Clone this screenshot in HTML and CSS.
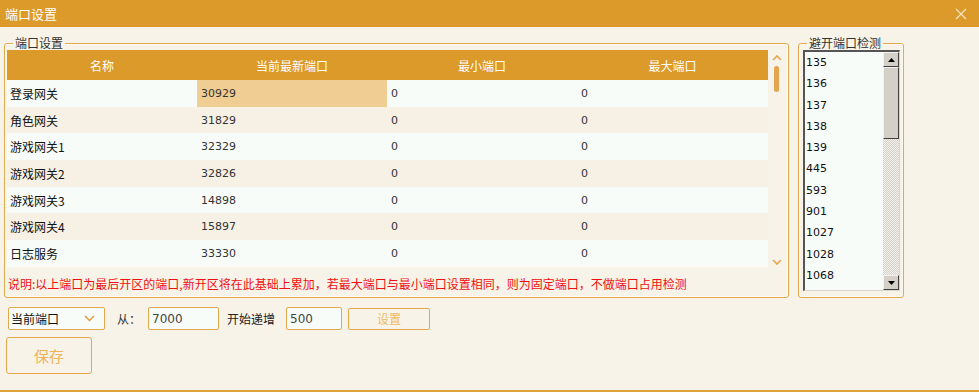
FILE: index.html
```html
<!DOCTYPE html>
<html lang="zh-CN">
<head>
    <meta charset="UTF-8">
    <title>端口设置</title>
    <link rel="stylesheet" href="styles.css">
</head>
<body>
    <div class="window">
        <div class="titlebar">
            <span class="title">端口设置</span>
            <svg class="close" width="12" height="12" viewBox="0 0 12 12">
                <path d="M1 1L11 11M11 1L1 11" stroke="#f6e6c4" stroke-width="1.2" fill="none"/>
            </svg>
        </div>

        <div class="content">
            <div class="top">
                <fieldset class="group ports">
                    <legend>端口设置</legend>
                    <div class="grid-wrap">
                        <div class="grid">
                            <div class="head">
                                <span>名称</span>
                                <span>当前最新端口</span>
                                <span>最小端口</span>
                                <span>最大端口</span>
                            </div>
                            <div class="rows" id="rows"></div>
                        </div>
                        <div class="vscroll">
                            <svg width="10" height="6" viewBox="0 0 10 6"><path d="M1 5L5 1L9 5" stroke="#e3a54e" stroke-width="1.6" fill="none"/></svg>
                            <div class="thumb"></div>
                            <div class="spacer"></div>
                            <svg width="10" height="6" viewBox="0 0 10 6"><path d="M1 1L5 5L9 1" stroke="#e3a54e" stroke-width="1.6" fill="none"/></svg>
                        </div>
                    </div>
                    <p class="note">说明:以上端口为最后开区的端口,新开区将在此基础上累加，若最大端口与最小端口设置相同，则为固定端口，不做端口占用检测</p>
                </fieldset>

                <fieldset class="group skip">
                    <legend>避开端口检测</legend>
                    <div class="listbox">
                        <ul class="items" id="skip-list"></ul>
                        <div class="classic-scroll">
                            <div class="btn"><svg width="7" height="4" viewBox="0 0 7 4"><path d="M0 4L3.5 0L7 4Z" fill="#000"/></svg></div>
                            <div class="cthumb"></div>
                            <div class="track"></div>
                            <div class="btn"><svg width="7" height="4" viewBox="0 0 7 4"><path d="M0 0L3.5 4L7 0Z" fill="#000"/></svg></div>
                        </div>
                    </div>
                </fieldset>
            </div>

            <div class="controls">
                <div class="select">
                    <span>当前端口</span>
                    <svg width="11" height="7" viewBox="0 0 11 7"><path d="M1 1L5.5 5.5L10 1" stroke="#e09a38" stroke-width="1.4" fill="none"/></svg>
                </div>
                <label class="from">从：</label>
                <input class="field start" type="text" value="7000">
                <label class="step-label">开始递增</label>
                <input class="field step" type="text" value="500">
                <button class="btn-set">设置</button>
            </div>
            <button class="btn-save">保存</button>
        </div>
    </div>

    <script>
        // port rows
        const ports = [
            { name: "登录网关", current: "30929", min: "0", max: "0" },
            { name: "角色网关", current: "31829", min: "0", max: "0" },
            { name: "游戏网关1", current: "32329", min: "0", max: "0" },
            { name: "游戏网关2", current: "32826", min: "0", max: "0" },
            { name: "游戏网关3", current: "14898", min: "0", max: "0" },
            { name: "游戏网关4", current: "15897", min: "0", max: "0" },
            { name: "日志服务", current: "33330", min: "0", max: "0" }
        ];

        const rows = document.getElementById("rows");
        ports.forEach((p, i) => {
            const row = document.createElement("div");
            row.className = "row" + (i % 2 ? " alt" : "");
            row.innerHTML =
                '<span class="name">' + p.name + '</span>' +
                '<span class="num' + (i === 0 ? ' selected' : '') + '">' + p.current + '</span>' +
                '<span class="num">' + p.min + '</span>' +
                '<span class="num">' + p.max + '</span>';
            rows.appendChild(row);
        });

        // skipped ports
        const skip = [135, 136, 137, 138, 139, 445, 593, 901, 1027, 1028, 1068];
        const list = document.getElementById("skip-list");
        skip.forEach(n => {
            const li = document.createElement("li");
            li.innerText = n;
            list.appendChild(li);
        });
    </script>
</body>
</html>
```

FILE: styles.css
```css
* {
    box-sizing: border-box;
}

body {
    margin: 0;
    font-family: "Noto Sans CJK SC", "Noto Sans", sans-serif;
    font-size: 12px;
    color: #222;
    background-color: #f8f3e8;
}

.window {
    width: 979px;
    height: 392px;
    display: flex;
    flex-direction: column;
    border-bottom: 2px solid #e0a23a;
}

.titlebar {
    height: 27px;
    background-color: #dc9a2a;
    display: flex;
    align-items: center;
    justify-content: space-between;
    padding: 0 12px 0 5px;
    color: #fff;
    font-size: 13px;
}

.content {
    flex: 1;
    padding: 10px 0 0 4px;
}

.top {
    display: flex;
    gap: 9px;
}

.group {
    margin: 0;
    border: 1px solid #e3a94f;
    box-shadow: inset 0 0 0 1px #fffaf0;
    border-radius: 3px;
    padding: 0 2px 0 2px;
    height: 261px;
}

.group legend {
    padding: 0 2px;
    margin-left: 6px;
    line-height: 12px;
    font-size: 12px;
    color: #333;
}

.ports {
    width: 785px;
    padding-right: 1px;
}

.skip {
    width: 106px;
    padding: 0 3px 0 4px;
}

.skip legend {
    margin-left: 4px;
}

.grid-wrap {
    display: flex;
    height: 218px;
    margin-top: 1px;
}

.grid {
    width: 761px;
}

.head {
    display: grid;
    grid-template-columns: 190px 190px 190px 191px;
    height: 30px;
    align-items: center;
    background-color: #dc9a2a;
    color: #fff;
    text-align: center;
}

.row {
    display: grid;
    grid-template-columns: 190px 190px 190px 191px;
    height: 26.7px;
    align-items: stretch;
    background-color: #f8fcf8;
}

.row.alt {
    background-color: #f6f1e4;
}

.row span {
    display: flex;
    align-items: center;
}

.name {
    padding-left: 3px;
    color: #111;
}

.num {
    padding-left: 4px;
    font-family: "DejaVu Sans", sans-serif;
    font-size: 11px;
    color: #333;
}

.num.selected {
    background-color: #f0cd92;
}

.vscroll {
    width: 17px;
    display: flex;
    flex-direction: column;
    align-items: center;
    padding: 5px 0 3px;
}

.thumb {
    width: 5px;
    height: 26px;
    margin-top: 5px;
    border-radius: 3px;
    background-color: #e3a54e;
}

.spacer {
    flex: 1;
}

.note {
    margin: 7px 0 0 1px;
    color: #f01010;
    white-space: nowrap;
}

.listbox {
    display: flex;
    height: 241px;
    margin-top: 1px;
    background-color: #f8fcf8;
    border-top: 2px solid #555;
    border-left: 2px solid #555;
    border-right: 1px solid #d8d4cc;
    border-bottom: 1px solid #d8d4cc;
}

.items {
    flex: 1;
    list-style: none;
    margin: 0;
    padding: 1px 0 0 1px;
    font-family: "DejaVu Sans", sans-serif;
    font-size: 11px;
    color: #111;
}

.items li {
    height: 21.3px;
    line-height: 20px;
}

.classic-scroll {
    width: 16px;
    display: flex;
    flex-direction: column;
}

.classic-scroll .btn {
    height: 15px;
    background-color: #d4d0c8;
    border: 1px solid;
    border-color: #f4f2ee #404040 #404040 #f4f2ee;
    display: flex;
    align-items: center;
    justify-content: center;
}

.cthumb {
    height: 72px;
    background-color: #d4d0c8;
    border: 1px solid;
    border-color: #f4f2ee #404040 #404040 #f4f2ee;
}

.track {
    flex: 1;
    background-color: #e6e3de;
    background-image: repeating-conic-gradient(#d4d0c8 0 25%, #f4f2ee 0 50%);
    background-size: 2px 2px;
}

.controls {
    display: flex;
    align-items: center;
    margin-top: 9px;
    padding-left: 4px;
    height: 23px;
}

.select {
    width: 97px;
    height: 23px;
    background-color: #f8fcf8;
    border: 1px solid #e3a94f;
    border-radius: 2px;
    display: flex;
    align-items: center;
    justify-content: space-between;
    padding: 0 9px 0 2px;
    color: #111;
}

.from {
    margin-left: 12px;
    width: 31px;
    color: #333;
}

.field {
    height: 23px;
    border: 1px solid #e3a94f;
    border-radius: 2px;
    background-color: #f8fcf8;
    padding: 0 3px;
    font-family: "DejaVu Sans", sans-serif;
    font-size: 12px;
    color: #444;
}

.start {
    width: 71px;
}

.step-label {
    margin-left: 8px;
    width: 59px;
    color: #222;
}

.step {
    width: 56px;
}

.btn-set {
    margin-left: 6px;
    width: 82px;
    height: 22px;
    background-color: #f8f3e8;
    border: 1px solid #e3a94f;
    border-radius: 2px;
    color: #edbb63;
    font-family: inherit;
    font-size: 12px;
}

.btn-save {
    display: block;
    margin: 7px 0 0 2px;
    width: 86px;
    height: 37px;
    background-color: #f8f3e8;
    border: 1px solid #e3a94f;
    border-radius: 3px;
    color: #edb458;
    font-family: inherit;
    font-size: 15px;
}
```
